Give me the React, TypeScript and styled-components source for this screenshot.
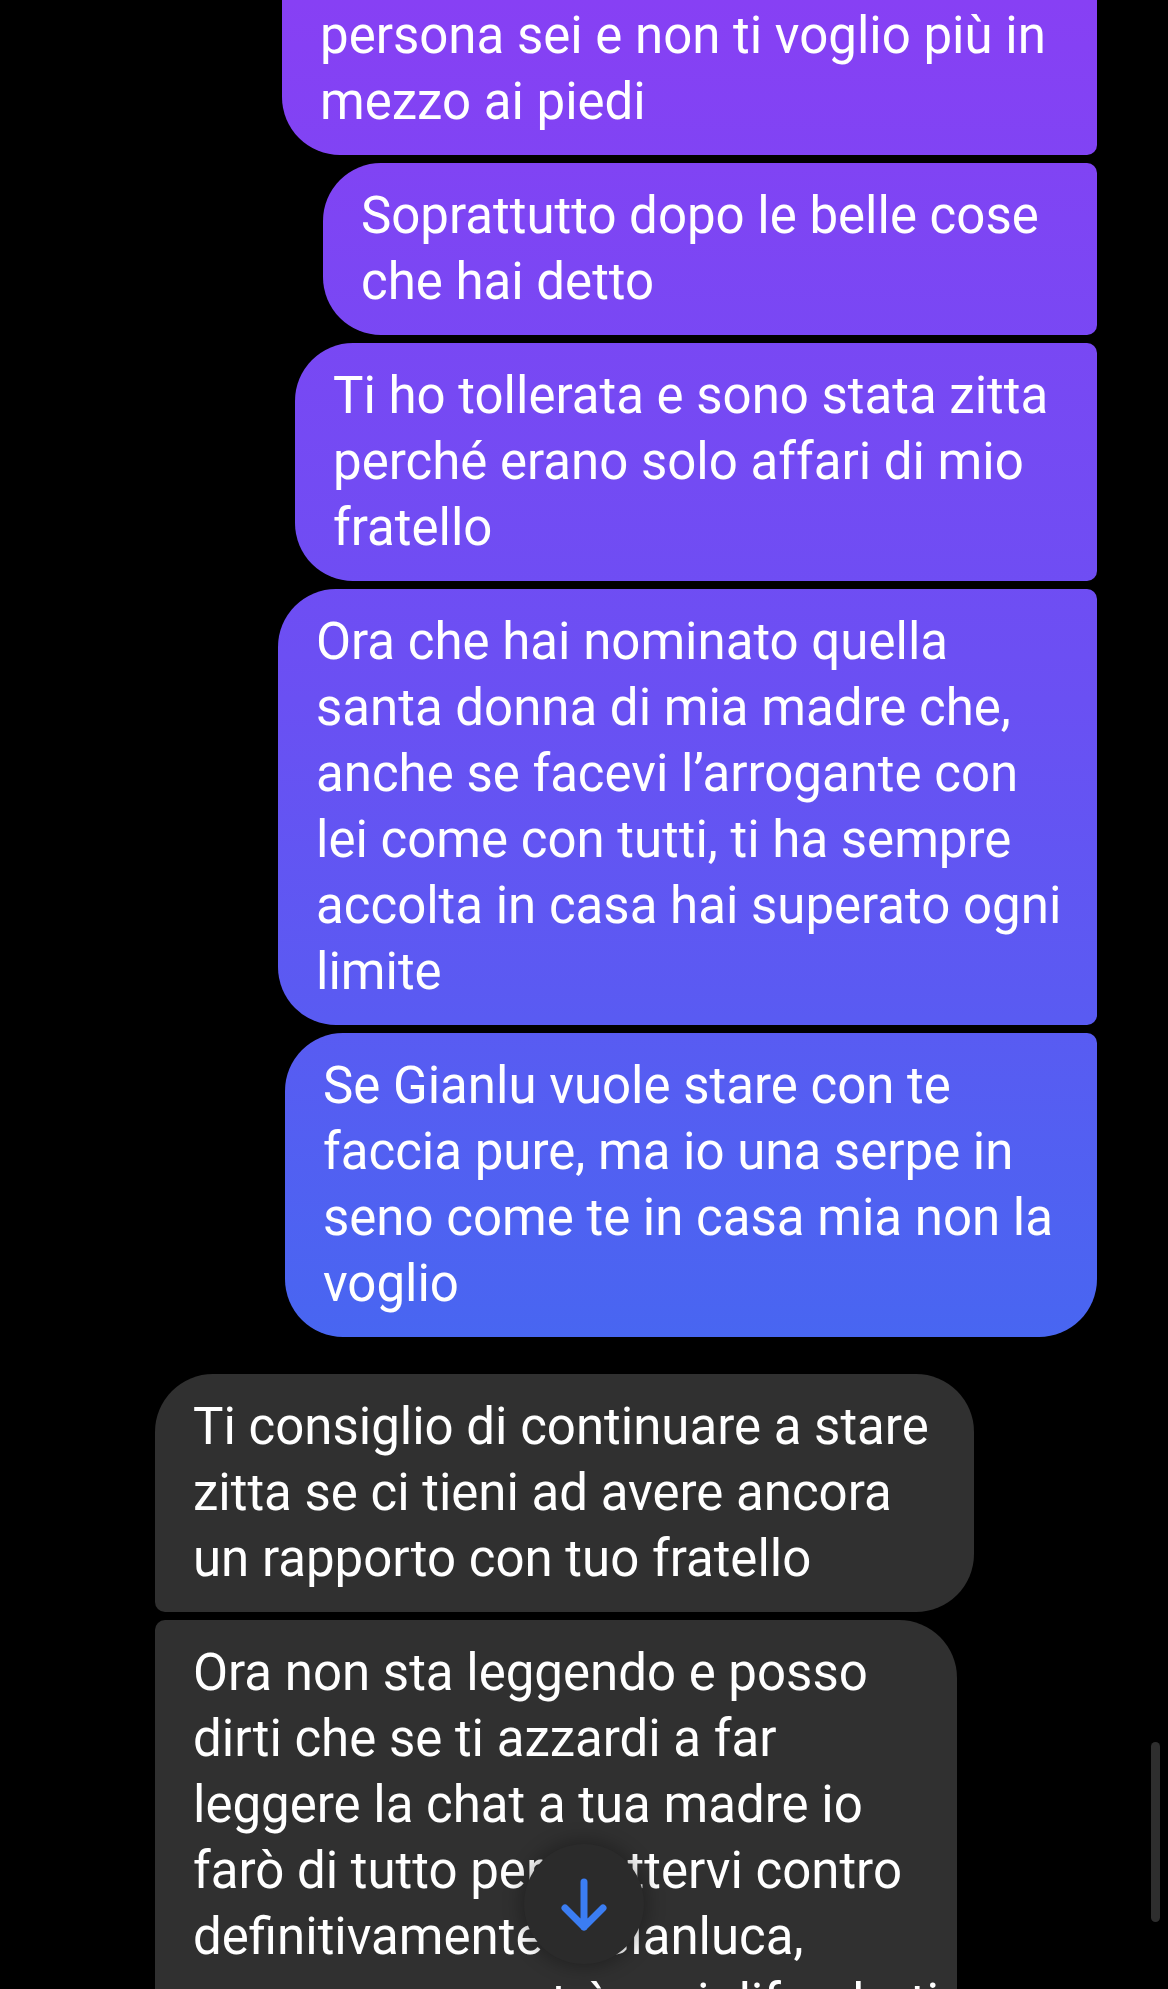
import styled, { createGlobalStyle } from "styled-components";

type Side = "out" | "in";

interface Message {
  lines: string[];
  width: number;
}

interface MessageGroup {
  side: Side;
  messages: Message[];
}

const GROUPS: MessageGroup[] = [
  {
    side: "out",
    messages: [
      {
        lines: [
          "Adesso ho realizzato che razza di",
          "persona sei e non ti voglio più in",
          "mezzo ai piedi",
        ],
        width: 815,
      },
      { lines: ["Soprattutto dopo le belle cose", "che hai detto"], width: 774 },
      {
        lines: [
          "Ti ho tollerata e sono stata zitta",
          "perché erano solo affari di mio",
          "fratello",
        ],
        width: 802,
      },
      {
        lines: [
          "Ora che hai nominato quella",
          "santa donna di mia madre che,",
          "anche se facevi l’arrogante con",
          "lei come con tutti, ti ha sempre",
          "accolta in casa hai superato ogni",
          "limite",
        ],
        width: 819,
      },
      {
        lines: [
          "Se Gianlu vuole stare con te",
          "faccia pure, ma io una serpe in",
          "seno come te in casa mia non la",
          "voglio",
        ],
        width: 812,
      },
    ],
  },
  {
    side: "in",
    messages: [
      {
        lines: [
          "Ti consiglio di continuare a stare",
          "zitta se ci tieni ad avere ancora",
          "un rapporto con tuo fratello",
        ],
        width: 819,
      },
      {
        lines: [
          "Ora non sta leggendo e posso",
          "dirti che se ti azzardi a far",
          "leggere la chat a tua madre io",
          "farò di tutto per mettervi contro",
          "definitivamente a Gianluca,",
          "mamma non potrà mai difenderti",
        ],
        width: 802,
      },
    ],
  },
];

const BIG = 58;
const SMALL = 10;

const GlobalStyle = createGlobalStyle`
  html, body {
    margin: 0;
    padding: 0;
    background: #000;
  }
  body {
    overflow: hidden;
  }
`;

const Screen = styled.div`
  position: relative;
  width: 1168px;
  height: 1989px;
  overflow: hidden;
  background: #000;
  font-family: Roboto, "Liberation Sans", sans-serif;
`;

const Thread = styled.div`
  display: flex;
  flex-direction: column;
  gap: 37px;
  margin-top: -83px;
  padding: 0 71px 0 155px;
`;

const Group = styled.div<{ $side: Side }>`
  display: flex;
  flex-direction: column;
  gap: 8px;
  align-items: ${(p) => (p.$side === "out" ? "flex-end" : "flex-start")};
`;

const Bubble = styled.div<{
  $side: Side;
  $first: boolean;
  $last: boolean;
}>`
  box-sizing: border-box;
  padding: 20px 38px;
  color: #fff;
  font-size: 51px;
  line-height: 66px;
  letter-spacing: 0;
  border-radius: ${(p) =>
    p.$side === "out"
      ? `${BIG}px ${p.$first ? BIG : SMALL}px ${p.$last ? BIG : SMALL}px ${BIG}px`
      : `${p.$first ? BIG : SMALL}px ${BIG}px ${BIG}px ${p.$last ? BIG : SMALL}px`};
  background: ${(p) =>
    p.$side === "out"
      ? "linear-gradient(180deg, #8740f4 0px, #6a50f3 700px, #4866f1 1340px, #3a72ef 1989px) fixed"
      : "#303030"};
`;

const Line = styled.span`
  display: block;
  white-space: nowrap;
`;

const ScrollDown = styled.button`
  position: absolute;
  left: 524px;
  top: 1844px;
  width: 120px;
  height: 120px;
  padding: 0;
  border: none;
  border-radius: 50%;
  background: #2b2b2b;
  box-shadow: 0 0 18px 4px rgba(0, 0, 0, 0.28);
  display: flex;
  align-items: center;
  justify-content: center;
`;

const ScrollBar = styled.div`
  position: absolute;
  left: 1151px;
  top: 1742px;
  width: 9px;
  height: 180px;
  border-radius: 5px;
  background: #2e2e2e;
`;

const App = () => {
  return (
    <>
      <GlobalStyle />
      <Screen>
        <Thread>
          {GROUPS.map((group, gi) => (
            <Group key={gi} $side={group.side}>
              {group.messages.map((msg, mi) => (
                <Bubble
                  key={mi}
                  $side={group.side}
                  $first={mi === 0 && gi !== 0}
                  $last={mi === group.messages.length - 1 && group.side === "out"}
                  style={{ width: msg.width }}
                >
                  {msg.lines.map((line, li) => (
                    <Line key={li}>{line}</Line>
                  ))}
                </Bubble>
              ))}
            </Group>
          ))}
        </Thread>
        <ScrollDown aria-label="Vai in fondo">
          <svg width="120" height="120" viewBox="0 0 120 120" fill="none">
            <path
              d="M60 38 V83 M41 64 L60 83 L79 64"
              stroke="#3b7df2"
              strokeWidth="7"
              strokeLinecap="round"
              strokeLinejoin="round"
            />
          </svg>
        </ScrollDown>
        <ScrollBar />
      </Screen>
    </>
  );
};

export default App;
